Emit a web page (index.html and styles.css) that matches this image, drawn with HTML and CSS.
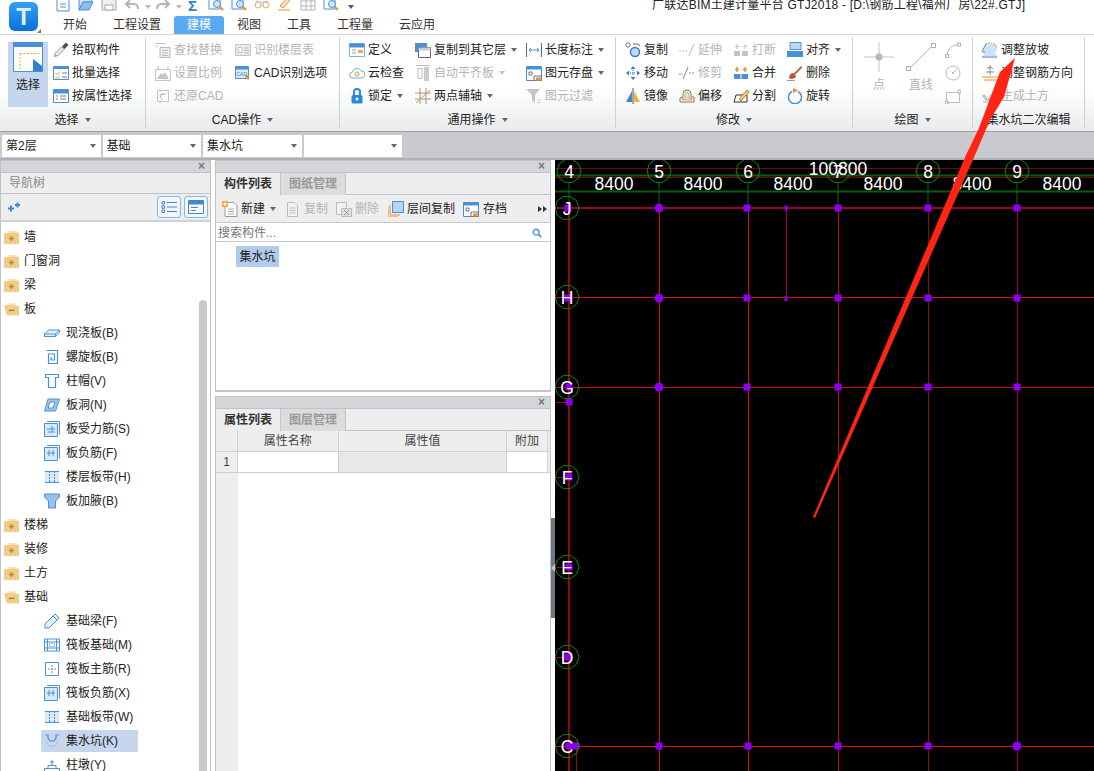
FILE: index.html
```html
<!DOCTYPE html>
<html lang="zh-CN">

<head>
    <meta charset="utf-8">
    <title>广联达BIM土建计量平台 GTJ2018</title>
    <link rel="stylesheet" href="styles.css">
</head>

<body>
    <!-- icon sprites -->
    <svg class="sprites" xmlns="http://www.w3.org/2000/svg">
        <symbol id="q-new" viewBox="0 0 16 16"><path d="M2 0h9l3 3v12H2z" fill="#fff" stroke="#4a90d9"/><path d="M5 8h6M5 11h6" stroke="#4a90d9"/></symbol>
        <symbol id="q-open" viewBox="0 0 16 16"><path d="M1 1h5l2 2h6v3H5L1 14z" fill="#cfe3f8" stroke="#4a90d9"/><path d="M5 6h10l-4 8H1z" fill="#8dbdec" stroke="#4a90d9"/></symbol>
        <symbol id="q-save" viewBox="0 0 16 16"><path d="M1 1h14v13H1z" fill="#eee" stroke="#aaa"/><path d="M4 9h8v5H4z" fill="#fff" stroke="#aaa"/></symbol>
        <symbol id="q-undo" viewBox="0 0 16 16"><path d="M6 4L2 8l4 4M2 8h8c3 0 4 2 4 5" fill="none" stroke="#b5b5b5" stroke-width="2"/></symbol>
        <symbol id="q-redo" viewBox="0 0 16 16"><path d="M10 4l4 4-4 4M14 8H6c-3 0-4 2-4 5" fill="none" stroke="#b5b5b5" stroke-width="2"/></symbol>
        <symbol id="q-find" viewBox="0 0 16 16"><path d="M1 1h11v12H1z" fill="#fff" stroke="#4a90d9"/><circle cx="9" cy="8" r="3.5" fill="#cfe3f8" stroke="#4a90d9"/><path d="M11.5 10.5l3.5 3.5" stroke="#f28c28" stroke-width="2"/></symbol>
        <symbol id="q-glass" viewBox="0 0 16 16"><circle cx="4" cy="9" r="3" fill="none" stroke="#e8a66a"/><circle cx="12" cy="9" r="3" fill="none" stroke="#e8a66a"/><path d="M7 9h2M3 2h10v4H3z" fill="none" stroke="#bbb"/></symbol>
        <symbol id="q-pen" viewBox="0 0 16 16"><path d="M3 10l7-8 3 2-7 8z" fill="#fbe2c0" stroke="#f28c28"/><path d="M1 14h12" stroke="#f28c28"/></symbol>
        <symbol id="q-grid" viewBox="0 0 16 16"><path d="M1 1h14v13H1zM1 5h14M1 10h14M6 1v13M11 1v13" fill="none" stroke="#b5b5b5"/></symbol>

        <symbol id="i-pick" viewBox="0 0 16 16"><path d="M1.5 14.500l1-3.500 6-6 2.500 2.500-6 6z" fill="#e6ecf3" stroke="#8794a3"/><path d="M9 4.500l4-4 2.500 2.500-4 4z" fill="#4a4a4a"/></symbol>
        <symbol id="i-batch" viewBox="0 0 16 16"><path d="M.5 1.500h15v13H.5z" fill="#fff" stroke="#4a90d9"/><path d="M.5 1.500h15v2.500H.5z" fill="#4a90d9"/><path d="M2.500 8l1.500 1.500L7 6.500M2.500 12l1.500 1.500L7 10.500" fill="none" stroke="#f28c28"/><path d="M9 8h5M9 12h5" stroke="#777"/></symbol>
        <symbol id="i-attr" viewBox="0 0 16 16"><path d="M.5 1.500h15v13H.5z" fill="#fff" stroke="#4a90d9"/><path d="M.5 1.500h15v4H.5z" fill="#4a90d9"/><path d="M3 8h2M3 11h2M7 8h6M7 11h6" stroke="#777"/></symbol>
        <symbol id="i-find" viewBox="0 0 16 16"><path d="M5 5.500h10v10H5z" fill="#eee" stroke="#bbb"/><path d="M7 8.500h6M7 11h6M7 13.500h6M1 1.500h9" stroke="#bbb"/><path d="M1 1.500v3h3" fill="none" stroke="#bbb" stroke-dasharray="1 1"/></symbol>
        <symbol id="i-scale" viewBox="0 0 16 16"><path d="M.5 4.500h15v11H.5z" fill="#fff" stroke="#c4c4c4"/><path d="M2 14l4-6 2 2 2-3 4 7z" fill="#c4c4c4"/><path d="M3 1v3M13 1v3" stroke="#bbb"/></symbol>
        <symbol id="i-restore" viewBox="0 0 16 16"><path d="M2.500 2.500h11v11h-11z" fill="#fff" stroke="#c4c4c4"/><path d="M11 6L5 7l2 5M5 7l3-2" fill="none" stroke="#b5b5b5"/><path d="M0 5h16M5 0v16" stroke="#ddd" stroke-dasharray="1 2"/></symbol>
        <symbol id="i-floor" viewBox="0 0 16 16"><path d="M.5 2.500h15v11H.5z" fill="#ececec" stroke="#c4c4c4"/><path d="M3 5.500h4v5H3z" fill="#fff" stroke="#c4c4c4"/><path d="M9 6h5M9 8.500h5M9 11h5" stroke="#bbb"/></symbol>
        <symbol id="i-cad" viewBox="0 0 16 16"><path d="M.5 1.500h13v12H.5z" fill="#dcebfa" stroke="#4a90d9"/><path d="M.5 1.500h13v3H.5z" fill="#4a90d9"/><text x="1.500" y="11" class="tiny">CAD</text><path d="M11 9l4 3-2 .5 1 2.500-4-2z" fill="#f28c28"/></symbol>
        <symbol id="i-define" viewBox="0 0 16 16"><path d="M.5 1.500h15v13H.5z" fill="#fff" stroke="#7cb1e6"/><path d="M.5 1.500h15v4H.5z" fill="#4a90d9"/><path d="M3 8h4M3 11h4" stroke="#999"/><path d="M9 8h5v3H9z" fill="#f6a648"/></symbol>
        <symbol id="i-cloud" viewBox="0 0 16 16"><path d="M4 13a3 3 0 01-.5-6A4.500 4.500 0 0112 6a3.500 3.500 0 011 7z" fill="#fff" stroke="#6cabe8"/><circle cx="8" cy="9" r="2" fill="none" stroke="#f28c28"/></symbol>
        <symbol id="i-lock" viewBox="0 0 16 16"><path d="M5 7V4a3 3 0 016 0v3" fill="none" stroke="#2d86dd" stroke-width="2"/><rect x="2.500" y="7" width="11" height="8.500" rx="1.500" fill="#2d86dd"/><circle cx="8" cy="11" r="1.500" fill="#fff"/></symbol>
        <symbol id="i-copyfloor" viewBox="0 0 16 16"><path d="M0 1h12v9H0z" fill="#4a90d9"/><path d="M3.500 5.500h12v10h-12z" fill="#fff" stroke="#666"/><path d="M3.500 5.500h12v3h-12z" fill="#ccc"/></symbol>
        <symbol id="i-autoalign" viewBox="0 0 16 16"><path d="M1 .5h14" stroke="#bbb"/><path d="M3 3.500h4v10H3z" fill="#fff" stroke="#bbb"/><path d="M9 2h5v14H9z" fill="#ccc"/></symbol>
        <symbol id="i-twopoint" viewBox="0 0 16 16"><path d="M5 0v16M11 0v16M0 5h16M0 11h16" stroke="#999"/><path d="M1 15L15 2" stroke="#f28c28"/></symbol>
        <symbol id="i-dim" viewBox="0 0 16 16"><path d="M.5 1v14M15.500 1v14" stroke="#666"/><path d="M3 8h10M5 6L3 8l2 2M11 6l2 2-2 2" fill="none" stroke="#4a90d9"/></symbol>
        <symbol id="i-store" viewBox="0 0 16 16"><path d="M.5 1.500h15v14H.5z" fill="#fff" stroke="#4a90d9"/><path d="M.5 1.500h15v3H.5z" fill="#4a90d9"/><path d="M3 7h3v3H3zM8 11h7v4.500H8z" fill="#fff" stroke="#777"/><path d="M10 12.500h4v3h-4z" fill="#f28c28"/></symbol>
        <symbol id="i-filter" viewBox="0 0 16 16"><path d="M0 1h14L9 7v8L6 12V7z" fill="#c4c4c4"/><path d="M11 12h4M11 14.500h4" stroke="#ccc"/></symbol>
        <symbol id="i-copy" viewBox="0 0 16 16"><rect x="1" y="1" width="4" height="4" rx="1.500" fill="#fff" stroke="#666"/><circle cx="10" cy="10" r="4.500" fill="#bcd9f5" stroke="#2d7fd0" stroke-width="1.500"/><path d="M8 2h5l2 2" fill="none" stroke="#666"/></symbol>
        <symbol id="i-move" viewBox="0 0 16 16"><path d="M8 1l2.500 3h-5zM8 15l2.500-3h-5zM1 8l3-2.500v5zM15 8l-3-2.500v5z" fill="#2d7fd0"/><path d="M5 8h6M8 5v6" stroke="#2d7fd0" stroke-dasharray="1 1"/></symbol>
        <symbol id="i-mirror" viewBox="0 0 16 16"><path d="M7 3v11H1z" fill="#3d87d6"/><path d="M9 3v11h6z" fill="#f4b33a"/><path d="M8 0v16" stroke="#555"/></symbol>
        <symbol id="i-extend" viewBox="0 0 16 16"><path d="M0 9h8" stroke="#bbb" stroke-dasharray="2 1"/><path d="M10 14l5-12" stroke="#bbb"/></symbol>
        <symbol id="i-trim" viewBox="0 0 16 16"><path d="M0 9h4M10 8h6" stroke="#888" stroke-dasharray="2 1"/><path d="M4 14l5-12" stroke="#888"/></symbol>
        <symbol id="i-offset" viewBox="0 0 16 16"><path d="M1 14V10l3-1V6a4 4 0 018 0v3h3v5z" fill="#fff" stroke="#777"/><path d="M3 12V11l3-1V6a2 2 0 014 0v4h3v2z" fill="#cfe3f8" stroke="#f0a030"/></symbol>
        <symbol id="i-break" viewBox="0 0 16 16"><path d="M1 9h6v5H1zM9 9h6v5H9z" fill="#c4c4c4"/><path d="M4 2v5M2 4.500h4M12 2v5M10 4.500h4" stroke="#c4c4c4"/></symbol>
        <symbol id="i-merge" viewBox="0 0 16 16"><path d="M1 9h14v5H1z" fill="#4a90d9"/><path d="M8 9v5" stroke="#fff"/><path d="M4 2v5M2 4.500h4M12 2v5M10 4.500h4" stroke="#f28c28" stroke-width="1.500"/></symbol>
        <symbol id="i-split" viewBox="0 0 16 16"><path d="M1 14l2-7h11v7z" fill="#fff" stroke="#333"/><path d="M6 11L14 2l2 2-8 9z" fill="#f7c98c" stroke="#b8762a"/></symbol>
        <symbol id="i-align" viewBox="0 0 16 16"><path d="M3 .5h11v7H3z" fill="#bcd9f5" stroke="#4a90d9"/><path d="M0 9h16v6H0z" fill="#4a90d9"/></symbol>
        <symbol id="i-delete" viewBox="0 0 16 16"><path d="M6 9L14 1l1.500 1.500-8 8z" fill="#a77b4e"/><path d="M2 13c0-3 2-5 4-5l3 3c0 2-3 3-5 3z" fill="#c8512a"/><path d="M0 16h8" stroke="#333"/></symbol>
        <symbol id="i-rotate" viewBox="0 0 16 16"><path d="M5 3.500a6.500 6.500 0 106 0" fill="none" stroke="#4a90d9" stroke-width="1.500"/><path d="M6 0l5 2.500L6 5z" fill="#f28c28"/></symbol>
        <symbol id="i-arc" viewBox="0 0 16 16"><path d="M2 14C2 7 7 3 13 3" fill="none" stroke="#bbb"/><path d="M.5 12.500h3v3h-3zM12.500 1h3v3h-3z" fill="#fff" stroke="#aaa"/></symbol>
        <symbol id="i-circle" viewBox="0 0 16 16"><circle cx="8" cy="8" r="7" fill="#fff" stroke="#bbb"/><circle cx="8" cy="8" r="1" fill="#aaa"/><path d="M8 8l4-4" stroke="#bbb"/></symbol>
        <symbol id="i-rect" viewBox="0 0 16 16"><path d="M1.500 4.500h13v10h-13z" fill="#fff" stroke="#bbb"/><path d="M13 2h3v3h-3zM0 13h3v3H0z" fill="#fff" stroke="#aaa"/></symbol>
        <symbol id="i-slope" viewBox="0 0 16 16"><path d="M0 9l6-7h9v7l-2 1 2 4H1l2-4z" fill="#cfe3f8"/><path d="M6 1h4M11 1l4 5" stroke="#f28c28" stroke-dasharray="2 1"/><path d="M0 9l5-8M0 10h3M0 15h15" stroke="#2d7fd0" fill="none"/></symbol>
        <symbol id="i-rebardir" viewBox="0 0 16 16"><path d="M8 0v10M5 4c0-2 6-2 6 0M4 7h8" fill="none" stroke="#888"/><path d="M0 12h16M2 15h14" stroke="#f28c28"/></symbol>
        <symbol id="i-earth" viewBox="0 0 16 16"><path d="M1 7l5 6 8-11" fill="none" stroke="#c4c4c4" stroke-width="3"/><path d="M1 14h13" stroke="#d4d4d4" stroke-width="2"/></symbol>

        <symbol id="t-closed" viewBox="0 0 15 14"><path d="M1 3h13a1 1 0 011 1v9a1 1 0 01-1 1H1a1 1 0 01-1-1V4a1 1 0 011-1z" fill="#f0cd86"/><path d="M4 1h9v2H4z" fill="#f6dfae"/><path d="M5 8.500h5M7.500 6v5" stroke="#b08a3e" stroke-width="1.500"/></symbol>
        <symbol id="t-open" viewBox="0 0 16 14"><path d="M3 1h10v3H3z" fill="#f6dfae"/><path d="M0 3h12l4 1v9a1 1 0 01-1 1H3z" fill="#f0cd86"/><path d="M5 8.500h6" stroke="#a5813a" stroke-width="1.500"/></symbol>
        <symbol id="t-slab" viewBox="0 0 16 16"><path d="M.5 9l4-4h11v2.500l-4 4H.5zM.5 9h11v2.500M11.500 9l4-4" fill="#e6f0fb" stroke="#4a90d9"/></symbol>
        <symbol id="t-spiral" viewBox="0 0 16 16"><path d="M2.500 1.500h11v13h-9V5h6v6H7V8" fill="none" stroke="#4a90d9" stroke-width="1.200"/></symbol>
        <symbol id="t-cap" viewBox="0 0 16 16"><path d="M1.500 1.500h13v3h-3v10h-7v-10h-3z" fill="#fff" stroke="#4a90d9" stroke-width="1.200"/></symbol>
        <symbol id="t-hole" viewBox="0 0 16 16"><path d="M4 2h11.500l-4 12H.5z" fill="#9cc2ec" stroke="#4a90d9"/><path d="M6 5h5l-2 6H4z" fill="#fff" stroke="#4a90d9"/></symbol>
        <symbol id="t-rebar1" viewBox="0 0 16 16"><path d="M3 .5h12.500v13" fill="none" stroke="#4a90d9"/><path d="M.5 2.500h13v13H.500z" fill="#d9e9fa" stroke="#4a90d9"/><path d="M3 8h8M8 5v6M4 11h7" stroke="#4a90d9"/></symbol>
        <symbol id="t-rebar2" viewBox="0 0 16 16"><path d="M3 .5h12.500v13" fill="none" stroke="#4a90d9"/><path d="M.5 2.500h13v13H.500z" fill="#d9e9fa" stroke="#4a90d9"/><path d="M3 8h8M5 5v6M9 5v6" stroke="#4a90d9"/></symbol>
        <symbol id="t-strip" viewBox="0 0 16 16"><path d="M1 2h14v12H1z" fill="#d9e9fa"/><path d="M5.500 2v12M10.500 2v12" stroke="#4a90d9" stroke-dasharray="2 1"/><path d="M1 2.500h14M1 13.500h14" stroke="#4a90d9"/></symbol>
        <symbol id="t-haunch" viewBox="0 0 16 16"><path d="M.5 1h15v3l-4 4v7h-7V8l-4-4z" fill="#9cc2ec" stroke="#4a90d9"/></symbol>
        <symbol id="t-beam" viewBox="0 0 16 16"><path d="M1 11L11 1l4 4L5 15H1z" fill="#e6f0fb" stroke="#4a90d9"/><path d="M9 3l4 4" stroke="#4a90d9"/></symbol>
        <symbol id="t-raft" viewBox="0 0 16 16"><path d="M.5 2h15v12H.5zM3.500 2v12M12.500 2v12M.5 5h15M.5 11h15" fill="none" stroke="#4a90d9"/><path d="M5.500 6.500h5v3h-5z" fill="none" stroke="#4a90d9" stroke-dasharray="1 1"/></symbol>
        <symbol id="t-main" viewBox="0 0 16 16"><path d="M1.500 1.500h13v13h-13z" fill="#fff" stroke="#4a90d9"/><path d="M8 4v8M4 8h8" stroke="#888" stroke-dasharray="2 1"/></symbol>
        <symbol id="t-pit" viewBox="0 0 16 16"><path d="M1 2h3v3l2 3h4l2-3V2h3" fill="none" stroke="#4a90d9" stroke-width="1.200"/><path d="M2 8l3 5h6l3-5" fill="none" stroke="#8aa" stroke-dasharray="1 1"/></symbol>
        <symbol id="t-pier" viewBox="0 0 16 16"><path d="M.5 11.500h15v3H.500zM4 8.500h8v3H4z" fill="#fff" stroke="#4a90d9"/><path d="M8 3v5M6 5h4" stroke="#4a90d9"/></symbol>

        <symbol id="b-new" viewBox="0 0 16 16"><path d="M3 1.500h9l3 3v11H3z" fill="#fff" stroke="#999"/><path d="M6 8h6M6 10.500h6M6 13h6" stroke="#aaa"/><path d="M0 0h6v6H0z" fill="#f6a648"/><path d="M3 1v4M1 3h4" stroke="#fff"/></symbol>
        <symbol id="b-copy" viewBox="0 0 16 16"><path d="M2.500 1.500h7l3 3v11h-10z" fill="#f2f2f2" stroke="#bbb"/><path d="M4.500 7h6M4.500 9.500h6M4.500 12h6" stroke="#bbb"/></symbol>
        <symbol id="b-del" viewBox="0 0 16 16"><path d="M.5 1.500h10v12H.500z" fill="#f2f2f2" stroke="#bbb"/><path d="M5.500 7.500h10v8h-10z" fill="#ddd" stroke="#bbb"/><path d="M8 9l5 5M13 9l-5 5" stroke="#999"/></symbol>
        <symbol id="b-floor" viewBox="0 0 16 16"><path d="M4.500 .5h11v11h-11z" fill="#b6d4f4" stroke="#4a90d9"/><path d="M2 4v10h10M0 6v10h10" fill="none" stroke="#f28c28"/></symbol>
    </svg>

    <header class="header">
        <div class="logo_box">
            <div class="logo">T</div>
            <span class="logo_grip"></span>
        </div>
        <div class="header_right">
            <div class="quick">
                <svg class="ico q1"><use href="#q-new"/></svg>
                <svg class="ico q2"><use href="#q-open"/></svg>
                <svg class="ico q2"><use href="#q-save"/></svg>
                <svg class="ico q2"><use href="#q-undo"/></svg>
                <span class="caret q_caret"></span>
                <svg class="ico q3"><use href="#q-redo"/></svg>
                <span class="caret q_caret"></span>
                <span class="sigma">Σ</span>
                <svg class="ico q4"><use href="#q-find"/></svg>
                <svg class="ico q2"><use href="#q-find"/></svg>
                <svg class="ico q2"><use href="#q-glass"/></svg>
                <svg class="ico q2"><use href="#q-pen"/></svg>
                <svg class="ico q2"><use href="#q-grid"/></svg>
                <svg class="ico q2"><use href="#q-find"/></svg>
                <span class="caret q_more"></span>
                <div class="title">广联达BIM土建计量平台 GTJ2018 - [D:\钢筋工程\福州厂房\22#.GTJ]</div>
            </div>
            <nav class="tabs">
                <a>开始</a>
                <a>工程设置</a>
                <a class="active">建模</a>
                <a>视图</a>
                <a>工具</a>
                <a>工程量</a>
                <a>云应用</a>
            </nav>
        </div>
    </header>

    <section class="ribbon">
        <div class="group g1">
            <div class="group_body">
                <div class="big_btn selected">
                    <svg class="big_ico" viewBox="0 0 30 30">
                        <path d="M.5.5h29v29H.5z" fill="#fff" stroke="#4a90d9"/>
                        <path d="M0 0h30v5H0z" fill="#4a90d9"/>
                        <path d="M7 11.500h20M7 11.500V27" fill="none" stroke="#f5a623" stroke-dasharray="2 1.500"/>
                        <path d="M20 17l9 7v5h-9z" fill="#2d7fd0"/>
                    </svg>
                    <span>选择</span>
                </div>
                <div class="col c_select">
                    <div class="item"><svg class="ico"><use href="#i-pick"/></svg><span>拾取构件</span></div>
                    <div class="item"><svg class="ico"><use href="#i-batch"/></svg><span>批量选择</span></div>
                    <div class="item"><svg class="ico"><use href="#i-attr"/></svg><span>按属性选择</span></div>
                </div>
            </div>
            <div class="group_label">选择<span class="caret"></span></div>
        </div>

        <div class="group g2">
            <div class="group_body">
                <div class="col c_80">
                    <div class="item off"><svg class="ico"><use href="#i-find"/></svg><span>查找替换</span></div>
                    <div class="item off"><svg class="ico"><use href="#i-scale"/></svg><span>设置比例</span></div>
                    <div class="item off"><svg class="ico"><use href="#i-restore"/></svg><span>还原CAD</span></div>
                </div>
                <div class="col">
                    <div class="item off"><svg class="ico"><use href="#i-floor"/></svg><span>识别楼层表</span></div>
                    <div class="item"><svg class="ico"><use href="#i-cad"/></svg><span>CAD识别选项</span></div>
                </div>
            </div>
            <div class="group_label">CAD操作<span class="caret"></span></div>
        </div>

        <div class="group g3">
            <div class="group_body">
                <div class="col c_66">
                    <div class="item"><svg class="ico"><use href="#i-define"/></svg><span>定义</span></div>
                    <div class="item"><svg class="ico"><use href="#i-cloud"/></svg><span>云检查</span></div>
                    <div class="item"><svg class="ico"><use href="#i-lock"/></svg><span>锁定</span><span class="caret"></span></div>
                </div>
                <div class="col c_111">
                    <div class="item"><svg class="ico"><use href="#i-copyfloor"/></svg><span>复制到其它层</span><span class="caret"></span></div>
                    <div class="item off"><svg class="ico"><use href="#i-autoalign"/></svg><span>自动平齐板</span><span class="caret"></span></div>
                    <div class="item"><svg class="ico"><use href="#i-twopoint"/></svg><span>两点辅轴</span><span class="caret"></span></div>
                </div>
                <div class="col">
                    <div class="item"><svg class="ico"><use href="#i-dim"/></svg><span>长度标注</span><span class="caret"></span></div>
                    <div class="item"><svg class="ico"><use href="#i-store"/></svg><span>图元存盘</span><span class="caret"></span></div>
                    <div class="item off"><svg class="ico"><use href="#i-filter"/></svg><span>图元过滤</span></div>
                </div>
            </div>
            <div class="group_label">通用操作<span class="caret"></span></div>
        </div>

        <div class="group g4">
            <div class="group_body">
                <div class="col c_54">
                    <div class="item"><svg class="ico"><use href="#i-copy"/></svg><span>复制</span></div>
                    <div class="item"><svg class="ico"><use href="#i-move"/></svg><span>移动</span></div>
                    <div class="item"><svg class="ico"><use href="#i-mirror"/></svg><span>镜像</span></div>
                </div>
                <div class="col c_54">
                    <div class="item off"><svg class="ico"><use href="#i-extend"/></svg><span>延伸</span></div>
                    <div class="item off"><svg class="ico"><use href="#i-trim"/></svg><span>修剪</span></div>
                    <div class="item"><svg class="ico"><use href="#i-offset"/></svg><span>偏移</span></div>
                </div>
                <div class="col c_54">
                    <div class="item off"><svg class="ico"><use href="#i-break"/></svg><span>打断</span></div>
                    <div class="item"><svg class="ico"><use href="#i-merge"/></svg><span>合并</span></div>
                    <div class="item"><svg class="ico"><use href="#i-split"/></svg><span>分割</span></div>
                </div>
                <div class="col">
                    <div class="item"><svg class="ico"><use href="#i-align"/></svg><span>对齐</span><span class="caret"></span></div>
                    <div class="item"><svg class="ico"><use href="#i-delete"/></svg><span>删除</span></div>
                    <div class="item"><svg class="ico"><use href="#i-rotate"/></svg><span>旋转</span></div>
                </div>
            </div>
            <div class="group_label">修改<span class="caret"></span></div>
        </div>

        <div class="group g5">
            <div class="group_body">
                <div class="big_btn off draw_btn">
                    <svg class="big_ico" viewBox="0 0 30 30">
                        <path d="M0 15h30M15 0v30" stroke="#c4c4c4"/>
                        <circle cx="15" cy="15" r="3.500" fill="#b5b5b5"/>
                    </svg>
                    <span>点</span>
                </div>
                <div class="big_btn off draw_btn">
                    <svg class="big_ico" viewBox="0 0 30 30">
                        <path d="M3 27L27 3" stroke="#b5b5b5"/>
                        <path d="M.5 24.500h4v4h-4zM25.500 1.500h4v4h-4z" fill="#fff" stroke="#aaa"/>
                    </svg>
                    <span>直线</span>
                </div>
                <div class="col off draw_col">
                    <div class="item"><svg class="ico"><use href="#i-arc"/></svg></div>
                    <div class="item"><svg class="ico"><use href="#i-circle"/></svg></div>
                    <div class="item"><svg class="ico"><use href="#i-rect"/></svg></div>
                </div>
            </div>
            <div class="group_label">绘图<span class="caret"></span></div>
        </div>

        <div class="group g6">
            <div class="group_body">
                <div class="col">
                    <div class="item"><svg class="ico"><use href="#i-slope"/></svg><span>调整放坡</span></div>
                    <div class="item"><svg class="ico"><use href="#i-rebardir"/></svg><span>调整钢筋方向</span></div>
                    <div class="item off"><svg class="ico"><use href="#i-earth"/></svg><span>生成土方</span></div>
                </div>
            </div>
            <div class="group_label">集水坑二次编辑</div>
        </div>
    </section>

    <div class="selectbar">
        <div class="combo">第2层<span class="caret"></span></div>
        <div class="combo">基础<span class="caret"></span></div>
        <div class="combo">集水坑<span class="caret"></span></div>
        <div class="combo"><span class="caret"></span></div>
    </div>

    <main class="workspace">
        <aside class="panel nav_panel">
            <div class="strip"><span class="close">×</span></div>
            <div class="nav_title">导航树</div>
            <div class="nav_tools">
                <svg class="nav_add" viewBox="0 0 12 10"><path d="M0 6.500h6M3 3.500v6M7 3h5M9.500.5v5" stroke="#3f86d3" stroke-width="2"/></svg>
                <div class="nav_btn">
                    <svg viewBox="0 0 16 14"><path d="M1 1.500h2.500v2.500H1zM1 5.800h2.500v2.500H1zM1 10h2.500v2.500H1z" fill="none" stroke="#3f86d3"/><path d="M6 2.500h10M6 7h10M6 11.500h10" stroke="#3f86d3"/></svg>
                </div>
                <div class="nav_btn">
                    <svg viewBox="0 0 16 14"><path d="M.5.5h15v13H.5z" fill="#fff" stroke="#3f86d3"/><path d="M.5.5h15v4H.5z" fill="#3f86d3"/><path d="M3 7.500h7M3 10.500h5" stroke="#3f86d3"/></svg>
                </div>
            </div>
            <div class="tree_wrap">
                <ul class="tree">
                    <li class="folder"><svg class="fold"><use href="#t-closed"/></svg>墙</li>
                    <li class="folder"><svg class="fold"><use href="#t-closed"/></svg>门窗洞</li>
                    <li class="folder"><svg class="fold"><use href="#t-closed"/></svg>梁</li>
                    <li class="folder"><svg class="fold"><use href="#t-open"/></svg>板</li>
                    <li class="leaf"><svg class="ico"><use href="#t-slab"/></svg>现浇板(B)</li>
                    <li class="leaf"><svg class="ico"><use href="#t-spiral"/></svg>螺旋板(B)</li>
                    <li class="leaf"><svg class="ico"><use href="#t-cap"/></svg>柱帽(V)</li>
                    <li class="leaf"><svg class="ico"><use href="#t-hole"/></svg>板洞(N)</li>
                    <li class="leaf"><svg class="ico"><use href="#t-rebar1"/></svg>板受力筋(S)</li>
                    <li class="leaf"><svg class="ico"><use href="#t-rebar2"/></svg>板负筋(F)</li>
                    <li class="leaf"><svg class="ico"><use href="#t-strip"/></svg>楼层板带(H)</li>
                    <li class="leaf"><svg class="ico"><use href="#t-haunch"/></svg>板加腋(B)</li>
                    <li class="folder"><svg class="fold"><use href="#t-closed"/></svg>楼梯</li>
                    <li class="folder"><svg class="fold"><use href="#t-closed"/></svg>装修</li>
                    <li class="folder"><svg class="fold"><use href="#t-closed"/></svg>土方</li>
                    <li class="folder"><svg class="fold"><use href="#t-open"/></svg>基础</li>
                    <li class="leaf"><svg class="ico"><use href="#t-beam"/></svg>基础梁(F)</li>
                    <li class="leaf"><svg class="ico"><use href="#t-raft"/></svg>筏板基础(M)</li>
                    <li class="leaf"><svg class="ico"><use href="#t-main"/></svg>筏板主筋(R)</li>
                    <li class="leaf"><svg class="ico"><use href="#t-rebar2"/></svg>筏板负筋(X)</li>
                    <li class="leaf"><svg class="ico"><use href="#t-strip"/></svg>基础板带(W)</li>
                    <li class="leaf current"><svg class="ico"><use href="#t-pit"/></svg>集水坑(K)</li>
                    <li class="leaf"><svg class="ico"><use href="#t-pier"/></svg>柱墩(Y)</li>
                </ul>
                <div class="tree_scroll"></div>
            </div>
        </aside>

        <div class="mid_column">
            <section class="panel list_panel">
                <div class="strip"><span class="close">×</span></div>
                <div class="panel_tabs">
                    <span class="ptab on">构件列表</span>
                    <span class="ptab">图纸管理</span>
                </div>
                <div class="list_tools">
                    <div class="tool t_new"><svg class="ico"><use href="#b-new"/></svg><span>新建</span><span class="caret"></span></div>
                    <div class="tool off t_copy"><svg class="ico"><use href="#b-copy"/></svg><span>复制</span></div>
                    <div class="tool off t_del"><svg class="ico"><use href="#b-del"/></svg><span>删除</span></div>
                    <div class="tool t_floor"><svg class="ico"><use href="#b-floor"/></svg><span>层间复制</span></div>
                    <div class="tool t_store"><svg class="ico"><use href="#i-store"/></svg><span>存档</span></div>
                    <svg class="more" viewBox="0 0 9 6"><path d="M0 0l4 3-4 3zM5 0l4 3-4 3z" fill="#333"/></svg>
                </div>
                <div class="search">
                    <span>搜索构件...</span>
                    <svg class="search_ico" viewBox="0 0 12 12"><circle cx="5" cy="5" r="3.500" fill="none" stroke="#3f9ad6" stroke-width="1.600"/><path d="M8 8l3 3" stroke="#3f9ad6" stroke-width="2"/></svg>
                </div>
                <div class="list_body">
                    <span class="list_item">集水坑</span>
                </div>
            </section>

            <section class="panel prop_panel">
                <div class="strip"><span class="close">×</span></div>
                <div class="panel_tabs">
                    <span class="ptab on">属性列表</span>
                    <span class="ptab">图层管理</span>
                </div>
                <div class="prop_head">
                    <div class="cell num"></div>
                    <div class="cell name">属性名称</div>
                    <div class="cell value">属性值</div>
                    <div class="cell extra">附加</div>
                </div>
                <div class="prop_row">
                    <div class="cell num">1</div>
                    <div class="cell name"></div>
                    <div class="cell value"></div>
                    <div class="cell extra"></div>
                </div>
                <div class="prop_rest"><div class="num_rest"></div></div>
            </section>
        </div>

        <div class="splitter"><div class="split_handle"><span></span></div></div>

        <div class="canvas">
            <svg class="drawing" viewBox="555 160 539 611" xmlns="http://www.w3.org/2000/svg">
                <defs>
                    <polygon id="bubble" points="12,0 9.700,7 3.700,11.400 -3.700,11.400 -9.700,7 -12,0 -9.700,-7 -3.700,-11.400 3.700,-11.400 9.700,-7" fill="none" stroke="#0c8a0c"/>
                    <rect id="node" x="-3.500" y="-3.500" width="7" height="7" fill="#8a00f0"/>
                    <circle id="dot" r="4.500" fill="#8a00f0"/>
                </defs>

                <path d="M555 168.500h539M555 177.500h539" stroke="#7a0508"/>
                <path d="M555 175.500h539M555 191.500h539" stroke="#0b5c0b" stroke-width="2"/>
                <path d="M569 183v25M659 183v25M748 183v25M838 183v25M928 183v25M1017 183v25" stroke="#0b6a0b"/>

                <path d="M569 208v563" stroke="#8f0a0a" stroke-width="2"/>
                <path d="M659.500 208v563M748.500 208v563" stroke="#e00a0a"/>
                <path d="M838.500 208v563" stroke="#c40a0a"/>
                <path d="M928.500 208v563" stroke="#8f0a0a"/>
                <path d="M1017.500 208v563" stroke="#a50a0a"/>
                <path d="M786.500 208v90" stroke="#a50a20"/>
                <path d="M576.500 746v25" stroke="#8f0a0a"/>

                <path d="M555 208h539" stroke="#96082a" stroke-width="2"/>
                <path d="M555 297.500h539" stroke="#d80a20"/>
                <path d="M555 387.500h539" stroke="#d80a20"/>
                <path d="M555 746.500h539" stroke="#f00a0a"/>
                <path d="M556 402.500h13M556 477.500h13M556 567.500h13M556 657.500h13" stroke="#a50a0a"/>

                <use href="#node" x="568" y="208"/>
                <use href="#dot" x="659" y="208"/>
                <use href="#node" x="747" y="208"/>
                <use href="#node" x="838" y="208"/>
                <use href="#node" x="928" y="208"/>
                <use href="#node" x="1017" y="208"/>
                <use href="#node" x="568" y="298"/>
                <use href="#dot" x="659" y="298"/>
                <use href="#node" x="747" y="298"/>
                <use href="#node" x="838" y="298"/>
                <use href="#node" x="928" y="298"/>
                <use href="#node" x="1017" y="298"/>
                <use href="#node" x="569" y="387"/>
                <use href="#dot" x="659" y="387"/>
                <use href="#node" x="747" y="387"/>
                <use href="#node" x="838" y="387"/>
                <use href="#node" x="928" y="387"/>
                <use href="#node" x="1017" y="387"/>
                <path d="M784.500 205.500h3v5h-3zM784.500 296h3v5h-3z" fill="#8a00f0"/>
                <use href="#node" x="569" y="402"/>
                <use href="#node" x="569" y="477"/>
                <use href="#node" x="569" y="567"/>
                <use href="#node" x="568" y="657"/>
                <use href="#node" x="569" y="746"/>
                <use href="#node" x="576" y="746"/>
                <use href="#node" x="659" y="746"/>
                <use href="#node" x="748" y="746"/>
                <use href="#node" x="838" y="746"/>
                <use href="#node" x="928" y="746"/>
                <use href="#dot" x="1017" y="746"/>

                <use href="#bubble" x="569" y="171"/>
                <use href="#bubble" x="659" y="171"/>
                <use href="#bubble" x="748" y="171"/>
                <use href="#bubble" x="838" y="171"/>
                <use href="#bubble" x="928" y="171"/>
                <use href="#bubble" x="1017" y="171"/>
                <use href="#bubble" x="567" y="208"/>
                <use href="#bubble" x="567" y="297"/>
                <use href="#bubble" x="567" y="387"/>
                <use href="#bubble" x="567" y="477"/>
                <use href="#bubble" x="567" y="567"/>
                <use href="#bubble" x="567" y="657"/>
                <use href="#bubble" x="567" y="746"/>

                <g class="cad_text">
                    <text x="569" y="178">4</text>
                    <text x="659" y="178">5</text>
                    <text x="748" y="178">6</text>
                    <text x="838" y="178">7</text>
                    <text x="928" y="178">8</text>
                    <text x="1017" y="178">9</text>
                    <text x="567" y="215">J</text>
                    <text x="567" y="304">H</text>
                    <text x="567" y="394">G</text>
                    <text x="567" y="484">F</text>
                    <text x="567" y="574">E</text>
                    <text x="567" y="664">D</text>
                    <text x="567" y="753">C</text>
                    <text x="614" y="190">8400</text>
                    <text x="703" y="190">8400</text>
                    <text x="793" y="190">8400</text>
                    <text x="883" y="190">8400</text>
                    <text x="972" y="190">8400</text>
                    <text x="1062" y="190">8400</text>
                    <text x="838" y="175">100800</text>
                </g>
            </svg>
        </div>
    </main>

    <!-- red annotation arrow drawn over the screenshot -->
    <svg class="annotation" viewBox="0 0 1094 771" xmlns="http://www.w3.org/2000/svg">
        <path d="M1015 58L1000 72L979 128L966 155L813 517L815 518L975 155L990 120L1004 97z" fill="#ff2414"/>
    </svg>
</body>

</html>
```

FILE: styles.css
```css
* {
    margin: 0;
    padding: 0;
    box-sizing: border-box;
}

html,
body {
    width: 1094px;
    height: 771px;
    overflow: hidden;
}

body {
    position: relative;
    background: #fff;
    color: #222;
    font-family: "Liberation Sans", "Noto Sans CJK SC", sans-serif;
    font-size: 12px;
    line-height: 16px;
}

.sprites {
    display: none;
}

.tiny {
    font-size: 5px;
    fill: #2d7fd0;
}

.ico {
    width: 16px;
    height: 16px;
    flex: none;
}

.caret {
    display: inline-block;
    width: 0;
    height: 0;
    margin-left: 5px;
    border-left: 3.5px solid transparent;
    border-right: 3.5px solid transparent;
    border-top: 4px solid #666;
}

/* title bar and tabs */

.header {
    display: flex;
    height: 34px;
}

.logo_box {
    position: relative;
    width: 46px;
    padding: 2px 0 0 9px;
}

.logo {
    width: 29px;
    height: 29px;
    border-radius: 6px;
    background: linear-gradient(#2fa3f3, #0b6fdc);
    color: #dff1ff;
    font-size: 24px;
    font-weight: bold;
    line-height: 29px;
    text-align: center;
}

.logo_grip {
    position: absolute;
    left: 37px;
    top: 29px;
    border-left: 4px solid transparent;
    border-bottom: 4px solid #777;
}

.header_right {
    flex: 1;
}

.quick {
    display: flex;
    align-items: flex-end;
    height: 12px;
    margin-bottom: 2px;
    padding-left: 9px;
    overflow: hidden;
}

.q2 {
    margin-left: 7px;
}

.q3 {
    margin-left: 4px;
}

.q4 {
    margin-left: 10px;
}

.q_caret {
    margin: 0 0 3px 5px;
    border-top-color: #bbb;
}

.sigma {
    flex: none;
    width: 10px;
    margin-left: 6px;
    color: #2d7fd0;
    font-size: 15px;
    font-weight: bold;
    line-height: 13px;
}

.q_more {
    margin: 0 0 3px 9px;
    border-top-color: #555;
}

.title {
    align-self: flex-start;
    margin-left: 298px;
    white-space: nowrap;
    line-height: 10px;
    letter-spacing: 0.22px;
    color: #222;
}

.tabs {
    display: flex;
    height: 20px;
    padding-left: 4px;
}

.tabs a {
    padding: 0 13px;
    line-height: 22px;
    color: #333;
}

.tabs .active {
    margin-top: 2px;
    border-radius: 3px 3px 0 0;
    background: #5aa9f5;
    color: #fff;
    line-height: 18px;
}

/* ribbon */

.ribbon {
    display: flex;
    height: 98px;
    border-top: 1px solid #d8d8d8;
    border-bottom: 1px solid #9a9ea3;
    background: linear-gradient(#fff 55%, #e9ebec);
}

.group {
    display: flex;
    flex-direction: column;
    flex: none;
    margin: 2px 0 3px;
    border-right: 1px solid #cfd2d5;
}

.g1 { width: 146px; }
.g2 { width: 194px; }
.g3 { width: 276px; }
.g4 { width: 237px; }
.g5 { width: 120px; }
.g6 { width: 112px; }

.group_body {
    display: flex;
    height: 72px;
    padding: 1px 0 0 9px;
}

.g1 .group_body {
    padding-left: 8px;
}

.group_label {
    display: flex;
    align-items: center;
    justify-content: center;
    flex: 1;
    padding-top: 3px;
}

.group_label .caret {
    margin-left: 6px;
}

.col {
    display: flex;
    flex-direction: column;
}

.c_select {
    margin-left: 5px;
}

.c_80 { width: 80px; }
.c_66 { width: 66px; }
.c_111 { width: 111px; }
.c_54 { width: 54px; }

.item {
    display: flex;
    align-items: center;
    height: 23px;
    white-space: nowrap;
}

.item .ico {
    margin-right: 3px;
}

.off,
.off .caret {
    color: #b4b4b4;
    border-top-color: #c4c4c4;
}

.big_btn {
    display: flex;
    flex-direction: column;
    align-items: center;
    width: 40px;
    height: 65px;
    margin-top: 4px;
}

.big_btn span {
    margin-top: 5px;
}

.big_btn.selected {
    background: #c5d6ee;
}

.big_ico {
    width: 30px;
    height: 30px;
    flex: none;
}

.draw_btn {
    width: 42px;
}

.g5 .group_body {
    padding-left: 5px;
}

.draw_col {
    margin-left: 3px;
}

/* combo row */

.selectbar {
    display: flex;
    gap: 2px;
    height: 28px;
    padding: 3px 0 0 2px;
    border-bottom: 2px solid #aeb1b5;
    background: #c8cacd;
}

.combo {
    position: relative;
    width: 98.5px;
    height: 22px;
    padding-left: 4px;
    background: #fff;
    line-height: 22px;
}

.combo .caret {
    position: absolute;
    right: 5px;
    top: 9px;
    margin: 0;
}

/* panels */

.workspace {
    display: flex;
    height: 611px;
}

.panel {
    display: flex;
    flex-direction: column;
    border: 1px solid #bfc3c7;
    border-width: 0 1px;
}

.strip {
    flex: none;
    height: 12px;
    border-top: 1px solid #bfc3c7;
    background: #d3d5d9;
    text-align: right;
}

.close {
    display: block;
    padding-right: 5px;
    color: #777;
    font-size: 12px;
    font-weight: bold;
    line-height: 10px;
}

.nav_panel {
    width: 211px;
    flex: none;
}

.nav_title {
    height: 22px;
    padding-left: 8px;
    border-top: 1px solid #bfc3c7;
    border-bottom: 1px solid #bfc3c7;
    background: #eee;
    color: #888;
    line-height: 21px;
}

.nav_tools {
    display: flex;
    align-items: center;
    gap: 3px;
    height: 28px;
    padding-left: 7px;
    border-bottom: 2px solid #d0d2d5;
    background: #eee;
}

.nav_add {
    width: 12px;
    height: 10px;
    margin-right: 134px;
}

.nav_btn {
    display: flex;
    align-items: center;
    justify-content: center;
    width: 24px;
    height: 22px;
    border: 1px solid #7ab8f5;
    border-radius: 3px;
    background: #f4f6f8;
}

.nav_btn svg {
    width: 16px;
    height: 14px;
}

.tree_wrap {
    display: flex;
    flex: 1;
    overflow: hidden;
}

.tree {
    flex: 1;
    padding-top: 3px;
    list-style: none;
}

.tree li {
    display: flex;
    align-items: center;
    height: 24px;
}

.folder {
    padding-left: 3px;
}

.fold {
    width: 15px;
    height: 14px;
    margin-right: 5px;
}

.leaf {
    padding-left: 43px;
}

.leaf .ico {
    margin-right: 6px;
}

.tree .current {
    width: 97px;
    height: 22px;
    margin: 1px 0 1px 40px;
    padding-left: 3px;
    background: #c5d6ee;
    white-space: nowrap;
}

.tree_scroll {
    flex: none;
    width: 8px;
    margin: 78px 3px 0 0;
    border-radius: 4px 4px 0 0;
    background: #c9c9c9;
}

.mid_column {
    display: flex;
    flex-direction: column;
    flex: none;
    width: 336px;
    margin-left: 4px;
}

.list_panel {
    height: 232px;
    border-bottom: 2px solid #bfc3c7;
}

.prop_panel {
    flex: 1;
    margin-top: 4px;
}

.panel_tabs {
    display: flex;
    flex: none;
    height: 23px;
    border-top: 1px solid #bfc3c7;
    border-bottom: 1px solid #bfc3c7;
    background: #eee;
}

.ptab {
    width: 65px;
    margin-bottom: -1px;
    text-align: center;
    line-height: 22px;
    color: #999;
    font-weight: bold;
    background: #dcdcdc;
    border-right: 1px solid #c4c4c4;
}

.ptab.on {
    color: #333;
    background: #eee;
}

.list_tools {
    display: flex;
    align-items: center;
    flex: none;
    height: 28px;
    padding: 1px 0 0 6px;
    border-bottom: 1px solid #c8c8c8;
    background: #eee;
}

.tool {
    display: flex;
    align-items: center;
    white-space: nowrap;
}

.tool .ico {
    margin-right: 3px;
}

.t_new {
    width: 63px;
}

.t_copy {
    width: 51px;
}

.t_del {
    width: 52px;
}

.t_floor {
    width: 75px;
}

.t_store .ico {
    margin-right: 4px;
}

.more {
    width: 9px;
    height: 6px;
    margin-left: auto;
    margin-right: 3px;
}

.search {
    display: flex;
    align-items: center;
    justify-content: space-between;
    flex: none;
    height: 19px;
    padding: 1px 8px 0 2px;
    border-bottom: 1px solid #c8c8c8;
    color: #777;
}

.search_ico {
    width: 10px;
    height: 10px;
}

.list_body {
    flex: 1;
    padding: 4px 0 0 20px;
}

.list_item {
    display: block;
    width: 43px;
    height: 21px;
    background: #b0cbee;
    text-align: center;
    line-height: 22px;
}

.prop_head,
.prop_row {
    display: flex;
    flex: none;
    height: 21px;
    padding-right: 2px;
    border-bottom: 1px solid #d0d0d0;
    background: #eee;
}

.cell {
    border-right: 1px solid #d0d0d0;
    text-align: center;
    line-height: 21px;
    color: #444;
}

.num {
    width: 22px;
}

.name {
    width: 101px;
}

.value {
    width: 169px;
}

.extra {
    width: 41px;
}

.prop_row .name,
.prop_row .extra {
    background: #fff;
}

.prop_row .value {
    background: #e8e8e8;
}

.prop_rest {
    flex: 1;
}

.num_rest {
    width: 22px;
    height: 100%;
    background: #eee;
}

.splitter {
    flex: none;
    width: 4px;
}

.split_handle {
    display: flex;
    align-items: center;
    height: 100px;
    margin-top: 358px;
    background: #6f7780;
}

.split_handle span {
    border-right: 4px solid #c4c8cc;
    border-top: 4px solid transparent;
    border-bottom: 4px solid transparent;
}

/* drawing */

.canvas {
    flex: 1;
    background: #000;
}

.drawing {
    display: block;
    width: 539px;
    height: 611px;
}

.cad_text text {
    fill: #fff;
    font-family: "Liberation Sans", sans-serif;
    font-size: 17.5px;
    text-anchor: middle;
}

.annotation {
    position: absolute;
    left: 0;
    top: 0;
    width: 1094px;
    height: 771px;
    pointer-events: none;
}
```
